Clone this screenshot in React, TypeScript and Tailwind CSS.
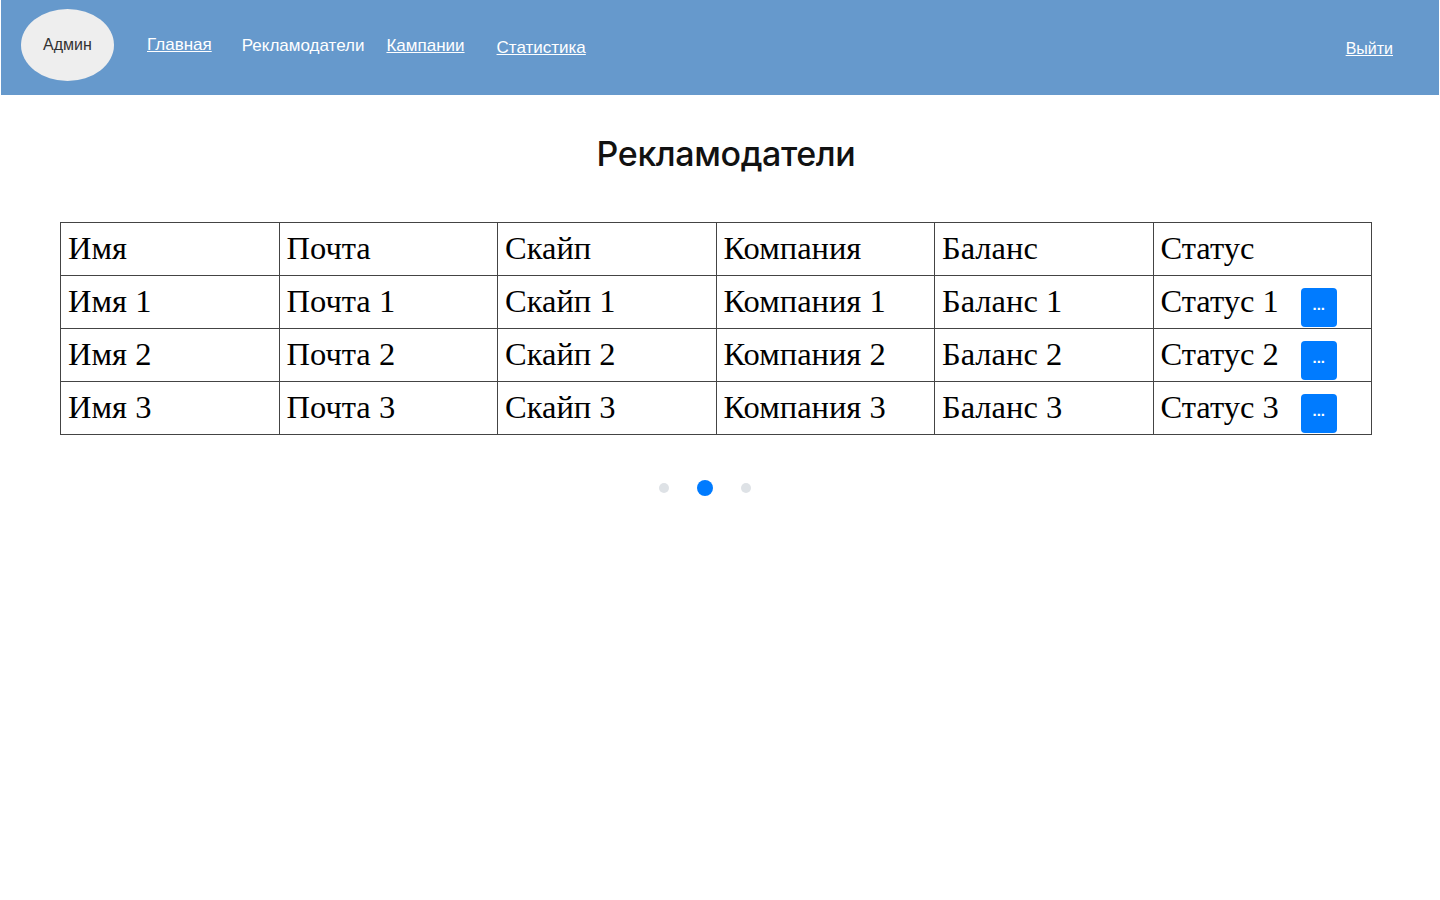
import React from "react";

const rows = [1, 2, 3];
const cell = "border border-[#444] px-[7px] py-[8px] align-top text-left font-normal";

export default function App() {
  return (
    <div className="min-h-[900px] bg-white">
      <header className="mx-[1px] h-[95px] bg-[#6699cc] flex items-start font-['Liberation_Sans',Arial,sans-serif] text-[17px] leading-[20px]">
        <div className="ml-[20px] mt-[9px] w-[93px] h-[72px] rounded-[50%] bg-[#eeeeee] flex items-center justify-center text-[#333] text-[16px]">
          Админ
        </div>
        <a href="#" className="ml-[33px] mt-[35px] text-white underline">Главная</a>
        <span className="ml-[30px] mt-[36px] text-white">Рекламодатели</span>
        <a href="#" className="ml-[22px] mt-[36px] text-white underline">Кампании</a>
        <a href="#" className="ml-[32px] mt-[38px] text-white underline">Статистика</a>
        <a href="#" className="ml-auto mr-[46px] mt-[39px] text-white underline text-[16px]">Выйти</a>
      </header>
      <main className="flex flex-col">
        <h1 className="self-center ml-[12px] mt-[38px] text-[34px] leading-[42px] text-[#111] font-['Inter',sans-serif] font-medium tracking-[-0.4px]">
          Рекламодатели
        </h1>
        <table className="ml-[60px] mt-[47px] w-[1312px] border-collapse table-fixed font-['Liberation_Serif','Times_New_Roman',serif] text-[32.5px] leading-[35.75px] text-black">
          <thead>
            <tr>
              {["Имя", "Почта", "Скайп", "Компания", "Баланс", "Статус"].map((h) => (
                <th key={h} className={cell}>
                  {h}
                </th>
              ))}
            </tr>
          </thead>
          <tbody>
            {rows.map((n) => (
              <tr key={n}>
                <td className={cell}>Имя {n}</td>
                <td className={cell}>Почта {n}</td>
                <td className={cell}>Скайп {n}</td>
                <td className={cell}>Компания {n}</td>
                <td className={cell}>Баланс {n}</td>
                <td className={cell}>
                  <div className="flex items-start">
                    <span>Статус {n}</span>
                    <button className="ml-[22px] mt-[4px] -mb-[7px] w-[36px] h-[39px] rounded-[4px] bg-[#007bff] text-white text-[15px] font-bold leading-none font-['Liberation_Sans',Arial,sans-serif] flex items-center justify-center pb-[5px]">
                      ...
                    </button>
                  </div>
                </td>
              </tr>
            ))}
          </tbody>
        </table>
        <div className="self-start ml-[659px] mt-[45px] flex items-center gap-[28px]">
          <span className="w-[10px] h-[10px] rounded-full bg-[#dee2e6]" />
          <span className="w-[16px] h-[16px] rounded-full bg-[#007bff]" />
          <span className="w-[10px] h-[10px] rounded-full bg-[#dee2e6]" />
        </div>
      </main>
    </div>
  );
}
